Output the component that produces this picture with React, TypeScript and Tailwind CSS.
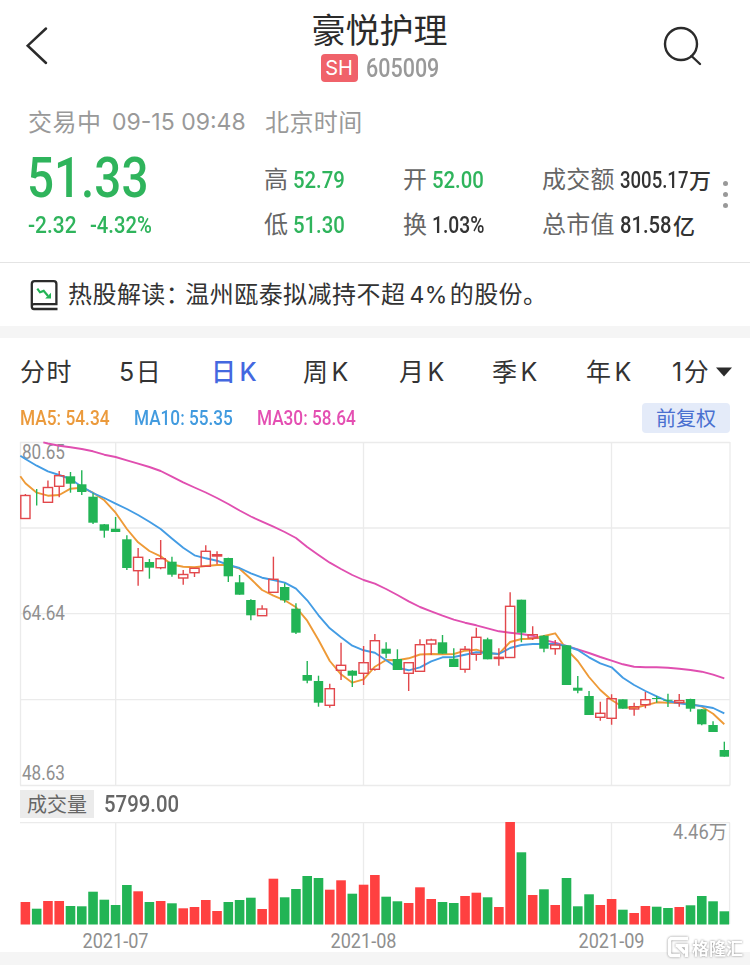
import React from "react";
import { clsx } from "clsx";

const UP = "#ff4040";
const DOWN = "#22b455";
const FIRST_X = 25.4;
const STEP = 11.273;

// [direction, high, body top, body bottom, low, volume top]
type Candle = ["u" | "d", number, number, number, number, number];

const candles: Candle[] = [
  ["u", 494, 495.5, 518.5, 518.5, 902],
  ["d", 489, 497, 497, 505.5, 908.7],
  ["u", 480.5, 487.5, 502.3, 502.3, 901],
  ["u", 471, 475.7, 486.3, 497.3, 901],
  ["d", 472, 476.3, 483.7, 492.7, 906],
  ["d", 470.3, 484.3, 492, 495, 906.3],
  ["d", 493.3, 496.7, 522.7, 524, 891.7],
  ["d", 524, 524.3, 530.7, 537.7, 899.7],
  ["d", 517, 528.7, 532, 532, 905],
  ["d", 535.3, 539.3, 568, 570, 885],
  ["u", 548, 557.3, 570.7, 585.7, 891.3],
  ["d", 559, 562, 567.7, 578.7, 902],
  ["u", 540, 558.7, 567.7, 569.3, 901],
  ["d", 556.7, 561.7, 574.7, 576.7, 903.3],
  ["u", 570, 574.5, 578, 584.7, 908.3],
  ["u", 567.7, 568.3, 572.7, 577, 907],
  ["u", 545.3, 551.3, 566.3, 566.3, 900],
  ["u", 551.3, 554.7, 556, 564.3, 911],
  ["d", 557.7, 558, 576.3, 582, 902],
  ["d", 575, 582.3, 594.7, 594.7, 900],
  ["d", 599.3, 600, 615.3, 620.3, 897.7],
  ["u", 605.3, 609, 615.7, 615.7, 909],
  ["u", 556.7, 579.3, 592.3, 592.3, 878.7],
  ["d", 583.3, 587, 600.3, 602.7, 897.3],
  ["d", 603.3, 608.7, 632.7, 634, 889],
  ["d", 661, 675, 680.7, 683.3, 876],
  ["d", 675.7, 681, 702.7, 706.7, 878],
  ["u", 683.7, 688.7, 705.3, 707.7, 889.7],
  ["u", 642.7, 665.3, 670.3, 680, 880.3],
  ["d", 670.3, 670.7, 675.7, 687, 893.7],
  ["u", 646, 662.7, 673.3, 685, 884.7],
  ["u", 634, 640.7, 669.3, 670.7, 875],
  ["d", 642.3, 648.7, 653.7, 658.3, 896.7],
  ["d", 649.3, 659, 670, 670, 901.3],
  ["u", 662.3, 662.7, 673.3, 691, 903],
  ["u", 639.3, 644.7, 671.3, 671.3, 887.3],
  ["u", 638.7, 640, 644, 655, 899],
  ["d", 635, 642.3, 653.7, 653.7, 902],
  ["d", 648.3, 658.7, 667, 667, 903],
  ["u", 646, 649.3, 669.3, 672.7, 896],
  ["u", 627.7, 637.3, 654.3, 660.7, 892.7],
  ["d", 637.7, 639.3, 659.3, 659.3, 897.3],
  ["u", 648.3, 657.3, 658.5, 665.7, 907],
  ["u", 592.3, 606.3, 657.5, 657.5, 822],
  ["d", 599.7, 599.7, 632.7, 642.3, 852.3],
  ["u", 626.3, 634.7, 638, 640, 895],
  ["d", 635, 635.7, 648.7, 652.3, 889.3],
  ["u", 640, 645, 648.7, 654.7, 905],
  ["d", 645, 645.3, 685, 685, 878],
  ["d", 676, 687.7, 690.7, 693.3, 906.3],
  ["d", 691, 696, 715, 715, 894.3],
  ["u", 701.7, 713.3, 717.3, 720.7, 905],
  ["u", 694.3, 698.7, 718.3, 724.7, 899],
  ["d", 699.3, 699.3, 708.7, 708.7, 909.7],
  ["u", 702.7, 706.7, 709, 715.7, 913],
  ["u", 692, 699.7, 704.7, 708.3, 906],
  ["d", 696, 698.5, 698.5, 702.7, 906.7],
  ["d", 693.7, 700.3, 700.3, 707, 908],
  ["u", 694, 700.7, 702.7, 706.7, 907],
  ["d", 698.7, 699, 708.7, 711.7, 905.3],
  ["d", 709, 709.3, 724.3, 725.3, 896],
  ["d", 721.3, 725, 732, 732, 901.3],
  ["d", 741.7, 750, 756.7, 756.7, 911.3],
];

const ma5 = [
  483.3, 492.7, 495.7, 495, 488.7, 487.7, 492.7, 500.3, 512.7, 529, 542.3, 551, 556.3, 564.5, 566.7,
  567.3, 566, 565, 565, 568.7, 579, 590, 595.7, 600.3, 607.3, 620.7, 640, 661, 674.3, 682.7, 679.3,
  666.7, 660, 660.3, 658.3, 654.5, 654, 654.3, 654, 650.7, 649.7, 653.3, 654, 642, 639, 638.7, 636,
  633.3, 649.3, 661, 677, 690, 700, 707, 708, 705.3, 702.3, 702.7, 702.7, 703.7, 706.7, 713.7, 724.3,
];

const ma10 = [
  459, 465.7, 471.3, 475, 479, 486.7, 493, 498, 503.7, 509, 515, 521.7, 529, 538.5, 547.7, 555.3,
  558.3, 560.7, 565, 568, 573.3, 577.7, 580, 582.7, 588.7, 600.3, 615.3, 628.3, 637.3, 645.7, 650.3,
  652.7, 660.3, 667.7, 670.3, 667.3, 661.3, 657.3, 657, 654.7, 652.3, 653, 654, 648, 645, 644, 644,
  644, 646, 650, 657.3, 663.3, 667.3, 677.7, 685, 691, 696.3, 701.3, 703.3, 704.7, 706, 708, 713.3,
];

// starts at the third candle, the first two are above the visible range
const ma30 = [
  443.5, 445.7, 447.3, 449, 451.3, 454.7, 457, 460.3, 463.7, 467, 471, 476.7, 482.3, 487.5, 492.5,
  498, 504, 510.5, 516.5, 521.7, 526.7, 532, 538, 547, 555, 562.7, 569, 575, 580, 583.7, 589, 595,
  601.3, 607, 611.3, 615.7, 619.7, 622.7, 625.3, 628.3, 631.3, 632.7, 634, 635.7, 640, 642.7, 646,
  649.3, 653, 657, 660.7, 664.3, 666.7, 667.3, 667.3, 667.7, 668.7, 670, 671.7, 674.7, 678.3,
];

const cx = (i: number) => FIRST_X + i * STEP;

const toPoints = (values: number[], start = 0) =>
  values.map((y, i) => `${cx(i + start).toFixed(1)},${y}`).join(" ");

const tabs = [
  { label: "分时", className: "w-[99px]" },
  { label: "5日", className: "w-[92px]" },
  { label: "日", k: true, className: "w-[92px]", active: true },
  { label: "周", k: true, className: "w-[96px]" },
  { label: "月", k: true, className: "w-[93px]" },
  { label: "季", k: true, className: "w-[94px]" },
  { label: "年", k: true, className: "w-[86px]" },
];

type NumProps = { children: React.ReactNode; className?: string };

// Narrow numerals
const Num = ({ children, className }: NumProps) => (
  <span
    className={clsx(
      "inline-block origin-left whitespace-nowrap font-['Roboto','Noto_Sans_CJK_SC',sans-serif] font-medium",
      className
    )}
  >
    {children}
  </span>
);

type StatProps = {
  label: string;
  value: string;
  unit?: string;
  green?: boolean;
  numClass?: string;
};

const Stat = ({ label, value, unit, green, numClass = "scale-x-[.865]" }: StatProps) => (
  <div className="flex h-[45px] items-center whitespace-nowrap text-2xl leading-none">
    <span className="-mt-[5px] mr-[5px] tracking-[0.3px] text-[#666]">{label}</span>
    <span className={clsx("flex items-center", green ? "text-[#2fb45c]" : "text-[#333]")}>
      <Num className={clsx("text-[23.5px]", numClass)}>{value}</Num>
      {unit && <span className="-mt-[4px] text-[22px] font-medium">{unit}</span>}
    </span>
  </div>
);

const Header = () => (
  <header className="flex h-[94px] items-start justify-between pl-5 pr-[46px]">
    <svg className="mt-[22px]" width="36" height="48" viewBox="20 22 36 48" fill="none">
      <path d="M46 28.5L27.7 45.7L46 63" stroke="#2b2b2b" strokeWidth="2.5" strokeLinecap="round" />
    </svg>
    <div className="flex flex-col items-center pl-[43px] pt-[10px]">
      <h1 className="text-[34px] leading-[38px] text-[#2b2b2b]">豪悦护理</h1>
      <div className="mt-[6px] flex items-center pl-[2px]">
        <span className="flex h-[28px] w-[37px] items-center justify-center rounded bg-[#f0626a] font-[Inter] text-[20px] leading-none text-white">
          SH
        </span>
        <Num className="ml-2 w-[75px] scale-x-[.86] text-[25px] leading-none text-[#999]">605009</Num>
      </div>
    </div>
    <svg className="mt-[22px]" width="44" height="48" viewBox="660 22 44 48" fill="none">
      <circle cx="681" cy="44" r="16" stroke="#2b2b2b" strokeWidth="2.4" />
      <path d="M691.5 56L700 64" stroke="#2b2b2b" strokeWidth="2.4" strokeLinecap="round" />
    </svg>
  </header>
);

const Quote = () => (
  <section className="h-[169px] border-b border-[#e4e4e4] pl-7">
    <div className="mb-[3px] flex h-[53px] items-center text-2xl leading-none text-[#999]">
      <span className="w-[84px] tracking-[0.5px]">交易中</span>
      <span className="w-[153px] pt-[3px] font-[Inter] text-[23px]">09-15 09:48</span>
      <span className="tracking-[0.4px]">北京时间</span>
    </div>
    <div className="flex">
      <div className="w-[236px] text-[#2fb45c]">
        <Num className="-ml-[1px] mt-[-1px] w-[140px] scale-x-[.85] text-[56px] leading-[58px]">51.33</Num>
        <div className="mt-[7px] flex leading-none">
          <Num className="w-[62px] scale-x-[.89] text-[23.5px]">-2.32</Num>
          <Num className="scale-x-[.86] text-[23.5px]">-4.32%</Num>
        </div>
      </div>
      <div className="w-[139px] pt-[8px]">
        <Stat label="高" value="52.79" green />
        <Stat label="低" value="51.30" green />
      </div>
      <div className="w-[139px] pt-[8px]">
        <Stat label="开" value="52.00" green />
        <Stat label="换" value="1.03%" numClass="scale-x-[.82]" />
      </div>
      <div className="w-[181px] pt-[8px]">
        <Stat label="成交额" value="3005.17" unit="万" numClass="w-[69px] scale-x-[.79]" />
        <Stat label="总市值" value="81.58" unit="亿" numClass="w-[53px] scale-x-[.86]" />
      </div>
      <div className="flex flex-col gap-[6px] pt-[31px]">
        <i className="size-[5px] rounded-full bg-[#999]" />
        <i className="size-[5px] rounded-full bg-[#999]" />
        <i className="size-[5px] rounded-full bg-[#999]" />
      </div>
    </div>
  </section>
);

const News = () => (
  <section className="flex h-[63px] items-center pl-[29px]">
    <svg width="30" height="34" viewBox="29 277 30 34" fill="none">
      <path
        d="M57.5 308H34C32.7 308 31.8 307 31.8 305.5V283C31.8 281.2 32.8 280.2 34.5 280.2H53.8C55.5 280.2 56.4 281.2 56.4 283V303.2H34C32.7 303.2 31.8 304.2 31.8 305.5"
        stroke="#2b2b2b"
        strokeWidth="2.3"
      />
      <path d="M37.3 287.7L40 291.3L43.7 289.9L48 295" stroke={DOWN} strokeWidth="2.2" />
      <path d="M51 291.8V297.6H45.2Z" fill={DOWN} />
    </svg>
    <p className="-mt-[1px] ml-[9px] whitespace-nowrap text-2xl leading-none tracking-[0.45px] text-[#333]">
      热股解读<span className="tracking-[-4.5px]">：</span>温州瓯泰拟减持不超
      <span className="ml-[4px] mr-[2px] font-[Inter] text-[23px]">4%</span>
      的股份。
    </p>
  </section>
);

const Tabs = () => (
  <nav className="flex h-[64px] items-center whitespace-nowrap pl-5 pt-[4px] font-['Inter','Noto_Sans_CJK_SC',sans-serif] text-[25px] leading-none text-[#333]">
    {tabs.map((tab) => (
      <span
        key={tab.label}
        className={clsx("tracking-[1.5px]", tab.className, tab.active && "font-medium text-[#4468e0]")}
      >
        {tab.label}
        {tab.k && <span className="ml-[2px]">K</span>}
      </span>
    ))}
    <span className="w-[43px] tracking-[1.5px]">1分</span>
    <svg className="ml-[1px]" width="16" height="10" viewBox="0 0 16 10">
      <path d="M0 0.5H16L8 9.5Z" fill="#2b2b2b" />
    </svg>
  </nav>
);

const Averages = () => (
  <div className="mb-1 flex h-8 items-center pl-5 pr-5 leading-none">
    <Num className="w-[114px] scale-x-[.865] text-[20px] text-[#eb9a3c]">MA5: 54.34</Num>
    <Num className="w-[123px] scale-x-[.86] text-[20px] text-[#429bdf]">MA10: 55.35</Num>
    <Num className="scale-x-[.86] text-[20px] text-[#e44fb2]">MA30: 58.64</Num>
    <button className="ml-auto h-[30px] w-[88px] rounded bg-[#e4ebf9] pb-[1px] text-[20px] leading-none text-[#4a70d0]">
      前复权
    </button>
  </div>
);

type AxisLabelProps = { x: number; y: number; width: number; children: string };

const AxisLabel = ({ x, y, width, children }: AxisLabelProps) => (
  <text
    x={x}
    y={y}
    textLength={width}
    lengthAdjust="spacingAndGlyphs"
    className="fill-[#8f8f8f] font-['Roboto','Noto_Sans_CJK_SC',sans-serif] text-[19.5px]"
  >
    {children}
  </text>
);

const PriceChart = () => (
  <svg className="block" width="750" height="350" viewBox="0 438 750 350" fill="none">
    <g stroke="#ebebeb" strokeWidth="1.3">
      {[442.5, 528, 613.7, 699.7, 785.5].map((y) => (
        <path key={y} d={`M20 ${y}H730`} />
      ))}
      {[20.5, 115.7, 363.5, 611.5, 730].map((x) => (
        <path key={x} d={`M${x} 442V785.5`} />
      ))}
    </g>
    <AxisLabel x={22} y={459} width={43}>80.65</AxisLabel>
    <AxisLabel x={22} y={619.5} width={43}>64.64</AxisLabel>
    <AxisLabel x={22} y={780} width={43}>48.63</AxisLabel>
    <g strokeWidth="1.9" strokeLinejoin="round">
      <polyline points={`43.3,442.3 ${toPoints(ma30, 2)}`} stroke="#e04fb0" />
      <polyline points={`20.3,476.3 ${toPoints(ma5)}`} stroke="#ee9a37" />
      <polyline points={`20.3,455.7 ${toPoints(ma10)}`} stroke="#439ce4" />
    </g>
    {candles.map(([dir, high, top, bottom, low], i) => {
      const x = cx(i);
      if (dir === "u") {
        return (
          <g key={i} stroke="#e2474b" strokeWidth="1.4">
            <path d={`M${x} ${high}V${top}M${x} ${bottom}V${low}`} />
            <rect x={x - 4.6} y={top} width="9.2" height={bottom - top} />
          </g>
        );
      }
      return (
        <g key={i}>
          <path d={`M${x} ${high}V${low}`} stroke={DOWN} strokeWidth="1.4" />
          {top === bottom ? (
            i > 1 && <path d={`M${x - 4.6} ${top}h9.2`} stroke={DOWN} />
          ) : (
            <rect x={x - 4.7} y={top} width="9.4" height={bottom - top} fill={DOWN} />
          )}
        </g>
      );
    })}
  </svg>
);

const VolumeChart = () => (
  <svg className="block" width="750" height="132" viewBox="0 820 750 132" fill="none">
    <path
      d="M20 822.7H730M115.7 822.7V924M363.5 822.7V924M611.5 822.7V924M729.6 822.7V924"
      stroke="#ebebeb"
      strokeWidth="1.3"
    />
    {candles.map((c, i) => (
      <rect
        key={i}
        x={cx(i) - 4.8}
        y={c[5]}
        width="9.6"
        height={924.5 - c[5]}
        fill={c[0] === "u" ? UP : DOWN}
      />
    ))}
    <AxisLabel x={673} y={839} width={54}>4.46万</AxisLabel>
    <AxisLabel x={82.5} y={948} width={66}>2021-07</AxisLabel>
    <AxisLabel x={330.5} y={948} width={66}>2021-08</AxisLabel>
    <AxisLabel x={578.5} y={948} width={66}>2021-09</AxisLabel>
  </svg>
);

const Watermark = () => (
  <div className="absolute bottom-[7px] right-[7px] flex items-center gap-[2px] drop-shadow-[0_0_1px_#888]">
    <svg width="23" height="22" viewBox="0 0 23 22" fill="none" stroke="#fff" strokeWidth="3.4">
      <path d="M21 2.5H5Q2.5 2.5 2.5 5V17Q2.5 19.5 5 19.5H13" />
      <path d="M8.5 9.5H19.5V21M11 10L18 17" />
    </svg>
    <span className="text-[17px] font-bold leading-none text-white">格隆汇</span>
  </div>
);

const App = () => {
  return (
    <div className="relative h-[965px] w-[750px] overflow-hidden bg-white font-['Noto_Sans_CJK_SC',sans-serif]">
      <Header />
      <Quote />
      <News />
      <div className="h-3 bg-[#f5f5f5]" />
      <Tabs />
      <Averages />
      <PriceChart />
      <div className="flex h-[32px] items-center pl-5 leading-none">
        <span className="flex h-[28px] w-[74px] items-center justify-center bg-[#ebebeb] pb-[1px] text-[20px] text-[#666]">
          成交量
        </span>
        <Num className="ml-[10px] scale-x-[.885] text-[23px] text-[#666]">5799.00</Num>
      </div>
      <VolumeChart />
      <div className="h-[13px] bg-[#f5f5f5]" />
      <Watermark />
    </div>
  );
};

export default App;
